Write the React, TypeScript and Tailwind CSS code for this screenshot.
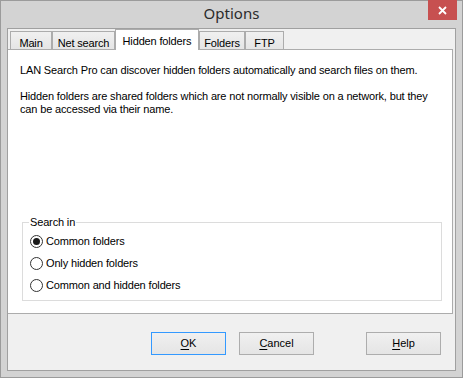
import { ReactNode } from "react";

const UI_FONT = { fontFamily: '"Liberation Sans", Arial, sans-serif' };

function Tab({ label, width, active }: { label: string; width: string; active?: boolean }) {
  if (active) {
    return (
      <div
        className={`${width} relative z-10 flex h-[21px] items-start justify-center border border-b-0 border-[#acacac] bg-white pt-[3px] text-[11px] tracking-[-0.15px] text-black`}
      >
        {label}
      </div>
    );
  }
  return (
    <div
      className={`${width} mt-[2px] flex h-[18px] items-start justify-center border border-b-0 border-[#acacac] bg-gradient-to-b from-[#f0f0f0] to-[#e5e5e5] pt-[3px] text-[11px] tracking-[-0.15px] text-black`}
    >
      {label}
    </div>
  );
}

function Radio({ checked, children }: { checked?: boolean; children: ReactNode }) {
  return (
    <div className="flex h-[22px] items-center gap-[3px]">
      <span className="flex h-[13px] w-[13px] items-center justify-center rounded-full border border-[#333333] bg-white">
        {checked && <span className="h-[7px] w-[7px] rounded-full bg-[#1a1a1a]" />}
      </span>
      <span className="text-[11px] tracking-[-0.15px] text-black">{children}</span>
    </div>
  );
}

function DialogButton({ first, rest, primary }: { first: string; rest: string; primary?: boolean }) {
  return (
    <button
      type="button"
      className={`flex h-[23px] w-[75px] items-center justify-center border bg-gradient-to-b from-[#f0f0f0] to-[#e5e5e5] text-[11px] text-black ${
        primary ? "border-[#3399ff]" : "border-[#adadad]"
      }`}
    >
      <span className="underline underline-offset-[2px]">{first}</span>
      {rest}
    </button>
  );
}

export default function App() {
  return (
    <div
      className="flex h-[378px] w-[463px] flex-col border border-[#9b9b9b] bg-[#d3d3d3] px-[6px] pb-[6px]"
      style={UI_FONT}
    >
      <div className="relative flex h-[27px] shrink-0 items-center justify-center">
        <span
          className="-mt-[2px] text-[15px] text-[#2b2b2b]"
          style={{ fontFamily: '"Noto Sans", "Open Sans", sans-serif' }}
        >
          Options
        </span>
        <div className="absolute -top-px right-[-1px] flex h-[20px] w-[29px] items-center justify-center bg-[#c75050]">
          <svg width="9" height="9" viewBox="0 0 9 9">
            <path d="M1 1 L8 8 M8 1 L1 8" stroke="white" strokeWidth="1.8" />
          </svg>
        </div>
      </div>

      <div className="flex flex-1 flex-col border border-[#a0a0a0] bg-[#f0f0f0]">
        <div className="flex h-[20px] shrink-0 items-start pl-[2px]">
          <Tab label="Main" width="w-[42px]" />
          <Tab label="Net search" width="w-[63px]" />
          <Tab label="Hidden folders" width="w-[84px]" active />
          <Tab label="Folders" width="w-[46px]" />
          <Tab label="FTP" width="w-[39px]" />
        </div>

        <div className="mr-[2px] flex h-[265px] shrink-0 flex-col border border-l-0 border-[#acacac] bg-white">
          <div className="pl-[12px] pr-[12px] pt-[14px] text-[11px] leading-[13px] tracking-[-0.15px] text-black">
            <p>LAN Search Pro can discover hidden folders automatically and search files on them.</p>
            <p className="mt-[13px]">
              Hidden folders are shared folders which are not normally visible on a network, but they
              can be accessed via their name.
            </p>
          </div>

          <fieldset className="mt-auto mb-[12px] ml-[14px] mr-[10px] h-[85px] border border-[#dcdcdc] pl-[7px]">
            <legend className="-ml-px px-px text-[11px] leading-[13px] tracking-[-0.15px] text-black">
              Search in
            </legend>
            <div className="flex flex-col pt-px">
              <Radio checked>Common folders</Radio>
              <Radio>Only hidden folders</Radio>
              <Radio>Common and hidden folders</Radio>
            </div>
          </fieldset>
        </div>

        <div className="flex flex-1 items-start pt-[18px]">
          <div className="ml-[143px]">
            <DialogButton first="O" rest="K" primary />
          </div>
          <div className="ml-[13px]">
            <DialogButton first="C" rest="ancel" />
          </div>
          <div className="ml-[52px]">
            <DialogButton first="H" rest="elp" />
          </div>
        </div>
      </div>
    </div>
  );
}
